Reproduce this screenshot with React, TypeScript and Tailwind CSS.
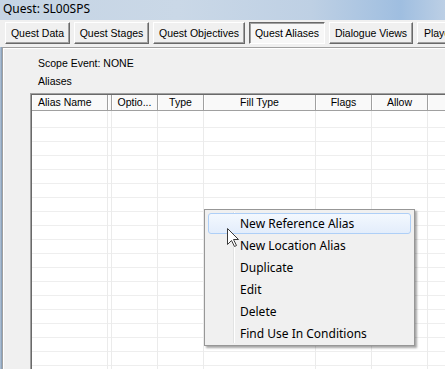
import React from 'react';

const tabs = [
  { label: 'Quest Data', w: 65 },
  { label: 'Quest Stages', w: 75 },
  { label: 'Quest Objectives', w: 92 },
  { label: 'Quest Aliases', w: 76, active: true },
  { label: 'Dialogue Views', w: 84 },
  { label: 'Player Dialogue', w: 88 },
];

const cols = [
  { label: 'Alias Name', w: 76, left: true },
  { label: '', w: 4 },
  { label: 'Optio...', w: 46 },
  { label: 'Type', w: 46 },
  { label: 'Fill Type', w: 112 },
  { label: 'Flags', w: 56 },
  { label: 'Allow', w: 56 },
];

const menuItems = [
  'New Reference Alias',
  'New Location Alias',
  'Duplicate',
  'Edit',
  'Delete',
  'Find Use In Conditions',
];

const rows = Array.from({ length: 19 });

export default function App() {
  return (
    <div
      className="relative w-[445px] h-[369px] overflow-hidden bg-[#f0f0f0] flex flex-col text-black"
      style={{ fontFamily: '"Liberation Sans", Arial, sans-serif' }}
    >
      {/* Title bar */}
      <div
        className="h-[20px] shrink-0 pl-[3px] text-[12px] leading-[18px] bg-[linear-gradient(to_right,#c5d4e4,#cad8e7_40%,#bed0e4_70%,#9fbee0_90%,#bccfe5)]"
        style={{ fontFamily: '"Noto Sans", "Open Sans", sans-serif' }}
      >
        Quest: SL00SPS
      </div>

      {/* Tabs row */}
      <div className="h-[27px] shrink-0 flex pt-[2px] pl-[5px] gap-[4px] whitespace-nowrap">
        {tabs.map((t) => (
          <div
            key={t.label}
            className={
              'h-[22px] shrink-0 flex items-center justify-center text-[10.5px] leading-none ' +
              (t.active
                ? 'bg-[#f7f7f7] border-t border-l border-[#696969] border-r border-b border-r-white border-b-white shadow-[inset_1px_1px_0_#a0a0a0]'
                : 'bg-[#f0f0f0] border-t border-l border-white border-r border-b border-r-[#696969] border-b-[#696969] shadow-[inset_-1px_-1px_0_#a0a0a0]')
            }
            style={{ width: t.w }}
          >
            {t.label}
          </div>
        ))}
      </div>

      {/* Panel */}
      <div className="flex-1 flex min-h-0">
        <div className="w-[2px] shrink-0 bg-[linear-gradient(to_right,#b7c8db,#7f97b2)]" />
        <div className="flex-1 min-w-0 border-t border-l border-[#a0a0a0] flex flex-col">
          <div className="flex-1 flex flex-col min-h-0 border-t border-l border-white pt-[8px]">
            <div className="pl-[34px] text-[10.5px] leading-[13px]">Scope Event: NONE</div>
            <div className="pl-[34px] mt-[5px] text-[10.5px] leading-[13px]">Aliases</div>
            <div className="ml-[26px] mt-[5px] flex-1 min-h-0 border-t border-l border-[#a0a0a0]">
              <div className="h-full border-t border-l border-[#696969] bg-white flex flex-col overflow-hidden">
                {/* Header */}
                <div className="h-[16px] shrink-0 flex bg-[#f9f9f9] whitespace-nowrap">
                  {cols.map((c, i) => (
                    <div
                      key={i}
                      className={
                        'shrink-0 h-full border-r border-b border-[#a0a0a0] shadow-[inset_1px_0_0_#fff] text-[10.5px] leading-[15px] overflow-hidden ' +
                        (c.left ? 'pl-[6px]' : 'text-center')
                      }
                      style={{ width: c.w }}
                    >
                      {c.label}
                    </div>
                  ))}
                  <div className="flex-1 h-full border-b border-[#a0a0a0] shadow-[inset_1px_0_0_#fff]" />
                </div>
                {/* Body */}
                <div className="flex-1 flex min-h-0">
                  {cols.map((c, i) => (
                    <div
                      key={i}
                      className="shrink-0 h-full border-r border-[#ebebeb] pt-[3px]"
                      style={{ width: c.w }}
                    >
                      {rows.map((_, r) => (
                        <div key={r} className="h-[14px] border-b border-[#eeeeee]" />
                      ))}
                    </div>
                  ))}
                  <div className="flex-1 h-full pt-[3px]">
                    {rows.map((_, r) => (
                      <div key={r} className="h-[14px] border-b border-[#eeeeee]" />
                    ))}
                  </div>
                </div>
              </div>
            </div>
          </div>
        </div>
      </div>

      {/* Context menu */}
      <div
        className="absolute left-[204px] top-[209px] w-[211px] border border-[#979797] bg-[#f0f0f0] pt-[3px] shadow-[2px_2px_2px_rgba(0,0,0,0.35)]"
        style={{ fontFamily: '"Noto Sans", "Open Sans", sans-serif' }}
      >
        <div className="absolute left-[28px] top-[2px] bottom-[2px] w-[1px] bg-[#e2e3e3]" />
        <div className="absolute left-[29px] top-[2px] bottom-[2px] w-[1px] bg-white" />
        {menuItems.map((m, i) => (
          <div
            key={m}
            className={
              'relative mx-[3px] mb-[1px] h-[21px] pl-[31px] flex items-center text-[12px] leading-none rounded-[3px] border ' +
              (i === 0
                ? 'border-[#aecff7] bg-[linear-gradient(to_bottom,#f3f8fe,#e3edfb)]'
                : 'border-transparent')
            }
          >
            {m}
          </div>
        ))}
      </div>

      {/* Mouse cursor */}
      <svg
        className="absolute left-[227px] top-[228px]"
        width="13"
        height="20"
        viewBox="0 0 13 20"
      >
        <path
          d="M0.5 0.5 L0.5 16.5 L4.5 12.5 L7.5 18.5 L9.5 17.5 L6.5 11.5 L11.5 11.5 Z"
          fill="#ffffff"
          stroke="#3a3a3a"
          strokeWidth="1"
          strokeLinejoin="miter"
        />
      </svg>
    </div>
  );
}
